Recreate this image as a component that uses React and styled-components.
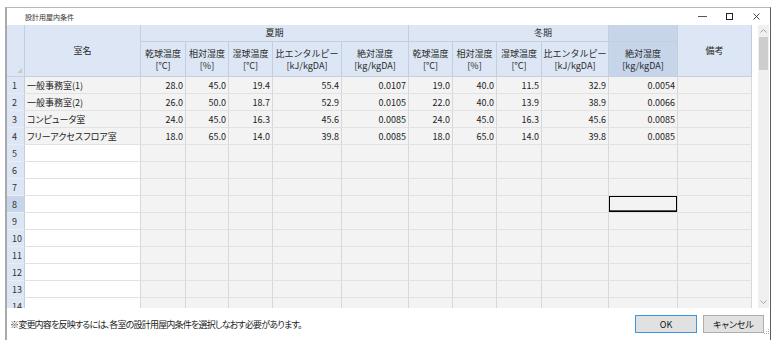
import styled, { createGlobalStyle } from "styled-components";

const COLS = [18, 116, 45, 43, 44, 69, 67, 44, 44, 45, 67, 69, 74];
const TEMPLATE = COLS.map((w) => `${w}px`).join(" ");

const HDR = "#dce6f4";
const HDR_SEL = "#c6d5ea";
const HDR_LINE = "#c3cfdf";
const CELL = "#f3f3f3";
const LINE = "#d8d8d8";

const SUB_HEADERS = [
  ["乾球温度", "[°C]"],
  ["相対湿度", "[%]"],
  ["湿球温度", "[°C]"],
  ["比エンタルピー", "[kJ/kgDA]"],
  ["絶対湿度", "[kg/kgDA]"],
];

const ROOMS = [
  ["一般事務室(1)", "28.0", "45.0", "19.4", "55.4", "0.0107", "19.0", "40.0", "11.5", "32.9", "0.0054"],
  ["一般事務室(2)", "26.0", "50.0", "18.7", "52.9", "0.0105", "22.0", "40.0", "13.9", "38.9", "0.0066"],
  ["コンピュータ室", "24.0", "45.0", "16.3", "45.6", "0.0085", "24.0", "45.0", "16.3", "45.6", "0.0085"],
  ["フリーアクセスフロア室", "18.0", "65.0", "14.0", "39.8", "0.0085", "18.0", "65.0", "14.0", "39.8", "0.0085"],
];

const SEL_ROW = 8;
const SEL_COL = 10; // index in data columns (0 = 室名)

const GlobalStyle = createGlobalStyle`
  html, body {
    margin: 0;
    padding: 0;
    background: #fff;
  }
  body {
    font-family: "Noto Sans CJK JP", "Liberation Sans", sans-serif;
    font-size: 9px;
    color: #222;
  }
  * {
    box-sizing: border-box;
  }
`;

const Window = styled.div`
  margin: 7px 0 0 5px;
  width: 766px;
  height: 333px;
  border-left: 2px solid #a9a9a9;
  border-top: 1px solid #b7b7b7;
  border-right: 1px solid #5c5c5c;
  display: flex;
  flex-direction: column;
  background: #fff;
`;

const TitleBar = styled.div`
  height: 17px;
  display: flex;
  align-items: center;
  padding-left: 18px;
`;

const Title = styled.span`
  flex: 1;
  font-size: 7px;
  color: #333;
`;

const Controls = styled.div`
  display: flex;
  height: 100%;
`;

const CtrlButton = styled.span`
  width: 27px;
  display: flex;
  align-items: center;
  justify-content: center;
`;

const GridArea = styled.div`
  height: 283px;
  display: flex;
`;

const Table = styled.div`
  width: 745px;
  display: flex;
  flex-direction: column;
  overflow: hidden;
`;

const HeaderGrid = styled.div`
  display: grid;
  grid-template-columns: ${TEMPLATE};
  grid-template-rows: 17px 35px;
`;

const HeaderCell = styled.div`
  grid-column: ${(p) => p.$col};
  grid-row: ${(p) => p.$row};
  background: ${(p) => (p.$sel ? HDR_SEL : HDR)};
  border-right: 1px solid ${HDR_LINE};
  border-bottom: 1px solid ${HDR_LINE};
  display: flex;
  flex-direction: column;
  align-items: center;
  justify-content: center;
  text-align: center;
  line-height: 12px;
  color: #2a2a2a;
  padding-top: ${(p) => (p.$two ? "2px" : "0")};
  white-space: nowrap;
`;

const WinterCell = styled(HeaderCell)`
  background: linear-gradient(
    90deg,
    ${HDR} 0 199px,
    ${HDR_LINE} 199px 200px,
    ${HDR_SEL} 200px
  );
`;

const CornerCell = styled(HeaderCell)`
  align-items: flex-end;
  justify-content: flex-end;
  padding: 0 2px 3px 0;
`;

const Body = styled.div`
  height: 231px;
  overflow: hidden;
`;

const Row = styled.div`
  display: grid;
  grid-template-columns: ${TEMPLATE};
  height: 17px;
`;

const RowHead = styled.div`
  background: ${(p) => (p.$sel ? HDR_SEL : HDR)};
  border-right: 1px solid ${HDR_LINE};
  border-bottom: 1px solid #e8eef7;
  padding-left: 5px;
  display: flex;
  align-items: center;
  color: #333;
`;

const Cell = styled.div`
  background: ${(p) => (p.$white ? "#fff" : CELL)};
  border-right: 1px solid ${LINE};
  border-bottom: 1px solid #e2e2e2;
  padding: 0 2px;
  display: flex;
  align-items: center;
  justify-content: ${(p) => (p.$num ? "flex-end" : "flex-start")};
  white-space: nowrap;
  overflow: hidden;
  font-feature-settings: "palt";
  box-shadow: ${(p) => (p.$sel ? "inset 0 0 0 1px #000, inset 0 -2px 0 #555" : "none")};
`;

const Gutter = styled.div`
  flex: 1;
  display: flex;
  padding-left: 6px;
`;

const Track = styled.div`
  width: 11px;
  background: #f0f0f0;
  display: flex;
  flex-direction: column;
  align-items: center;
`;

const Arrow = styled.div`
  height: 12px;
  display: flex;
  align-items: center;
  justify-content: center;
`;

const Thumb = styled.div`
  width: 9px;
  height: 33px;
  background: #cdcdcd;
`;

const Spacer = styled.div`
  flex: 1;
`;

const Footer = styled.div`
  flex: 1;
  display: flex;
  align-items: center;
  padding-left: 3px;
`;

const Note = styled.span`
  flex: 1;
  font-feature-settings: "palt";
  letter-spacing: -0.8px;
  color: #222;
`;

const Buttons = styled.div`
  display: flex;
  gap: 6px;
`;

const Button = styled.button`
  height: 18px;
  width: ${(p) => p.$w}px;
  padding: 0;
  background: #e1e1e1;
  border: 1px solid ${(p) => (p.$primary ? "#3c98e4" : "#adadad")};
  font-family: inherit;
  font-size: 9px;
  color: #111;
  font-feature-settings: "palt";
`;

const Grip = styled.div`
  width: 6px;
  align-self: flex-end;
  margin-bottom: 5px;
  display: flex;
`;

function Chevron({ down }) {
  return (
    <svg width="7" height="4" viewBox="0 0 7 4">
      <path
        d={down ? "M0.5 0.5 L3.5 3.5 L6.5 0.5" : "M0.5 3.5 L3.5 0.5 L6.5 3.5"}
        fill="none"
        stroke="#a3a3a3"
        strokeWidth="1"
      />
    </svg>
  );
}

export default function App() {
  const rows = Array.from({ length: 14 }, (_, i) => ROOMS[i] || Array(11).fill(""));
  return (
    <>
      <GlobalStyle />
      <Window>
        <TitleBar>
          <Title>設計用屋内条件</Title>
          <Controls>
            <CtrlButton>
              <svg width="9" height="1" viewBox="0 0 9 1">
                <rect width="9" height="1" fill="#555" />
              </svg>
            </CtrlButton>
            <CtrlButton>
              <svg width="7" height="7" viewBox="0 0 7 7">
                <rect x="0.5" y="0.5" width="6" height="6" fill="none" stroke="#222" />
              </svg>
            </CtrlButton>
            <CtrlButton>
              <svg width="7" height="7" viewBox="0 0 7 7">
                <path d="M0.5 0.5 L6.5 6.5 M6.5 0.5 L0.5 6.5" stroke="#333" strokeWidth="0.9" />
              </svg>
            </CtrlButton>
          </Controls>
        </TitleBar>

        <GridArea>
          <Table>
            <HeaderGrid>
              <CornerCell $col="1" $row="1 / 3">
                <svg width="5" height="5" viewBox="0 0 5 5">
                  <polygon points="5,0 5,5 0,5" fill="#c4c9d0" />
                </svg>
              </CornerCell>
              <HeaderCell $col="2" $row="1 / 3">室名</HeaderCell>
              <HeaderCell $col="3 / 8" $row="1">夏期</HeaderCell>
              <WinterCell $col="8 / 13" $row="1">冬期</WinterCell>
              <HeaderCell $col="13" $row="1 / 3">備考</HeaderCell>
              {[...SUB_HEADERS, ...SUB_HEADERS].map(([a, b], i) => (
                <HeaderCell key={i} $col={`${i + 3}`} $row="2" $two $sel={i === 9}>
                  <span>{a}</span>
                  <span>{b}</span>
                </HeaderCell>
              ))}
            </HeaderGrid>
            <Body>
              {rows.map((r, i) => (
                <Row key={i}>
                  <RowHead $sel={i + 1 === SEL_ROW}>{i + 1}</RowHead>
                  {r.map((v, j) => (
                    <Cell
                      key={j}
                      $num={j > 0}
                      $white={j === 0 && i >= ROOMS.length}
                      $sel={i + 1 === SEL_ROW && j === SEL_COL}
                    >
                      {v}
                    </Cell>
                  ))}
                  <Cell />
                </Row>
              ))}
            </Body>
          </Table>
          <Gutter>
            <Track>
              <Arrow>
                <Chevron />
              </Arrow>
              <Thumb />
              <Spacer />
              <Arrow>
                <Chevron down />
              </Arrow>
            </Track>
          </Gutter>
        </GridArea>

        <Footer>
          <Note>※変更内容を反映するには、各室の設計用屋内条件を選択しなおす必要があります。</Note>
          <Buttons>
            <Button $primary $w={62}>OK</Button>
            <Button $w={61}>キャンセル</Button>
          </Buttons>
          <Grip>
            <svg width="6" height="6" viewBox="0 0 6 6">
              <rect x="4" y="0" width="1" height="1" fill="#b0b0b0" />
              <rect x="2" y="2" width="1" height="1" fill="#b0b0b0" />
              <rect x="4" y="2" width="1" height="1" fill="#b0b0b0" />
              <rect x="0" y="4" width="1" height="1" fill="#b0b0b0" />
              <rect x="2" y="4" width="1" height="1" fill="#b0b0b0" />
              <rect x="4" y="4" width="1" height="1" fill="#b0b0b0" />
            </svg>
          </Grip>
        </Footer>
      </Window>
    </>
  );
}
